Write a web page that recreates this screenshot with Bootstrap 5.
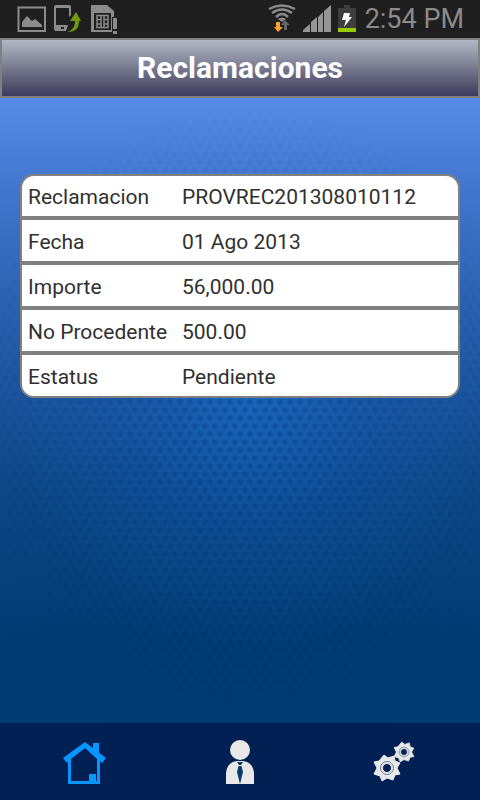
<!DOCTYPE html>
<html lang="es">
<head>
<meta charset="utf-8">
<meta name="viewport" content="width=device-width, initial-scale=1">
<title>Reclamaciones</title>
<link href="https://cdn.jsdelivr.net/npm/bootstrap@5.3.0/dist/css/bootstrap.min.css" rel="stylesheet">
<style>
body { font-family: Roboto, "Noto Sans", sans-serif; background: #003a70; }
.status-bar { height: 38px; background: #1f1f1f; color: #8b8b8b; }
.clock { font-size: 27px; line-height: 38px; }
.title-bar { border: 2px solid #808080; background: linear-gradient(#b3b7c4, #3c3b5c); }
.title-bar h1 { font-size: 30px; line-height: 56px; font-weight: 700; }
.backdrop { position: relative; isolation: isolate;
  background:
    radial-gradient(ellipse 240px 240px at 52% 50%, rgba(20,125,225,.45), rgba(20,110,210,.2) 50%, rgba(20,120,220,0)),
    linear-gradient(#578be9 0%, #4679d2 12%, #2e66b5 30%, #1d559f 46%, #0e4889 62%, #033c75 85%, #003a70 100%); }
.backdrop::before { content: ""; position: absolute; inset: 0; z-index: -1;
  background-image: radial-gradient(circle, rgba(0,35,95,.3) 1px, rgba(0,35,95,0) 4px), radial-gradient(circle, rgba(0,35,95,.3) 1px, rgba(0,35,95,0) 4px);
  background-size: 10px 16px; background-position: 0 0, 5px 8px;
  -webkit-mask-image: radial-gradient(ellipse 300px 330px at 52% 54%, #000, rgba(0,0,0,.6) 50%, transparent);
  mask-image: radial-gradient(ellipse 300px 330px at 52% 54%, #000, rgba(0,0,0,.6) 50%, transparent); }
.claim { margin: 76px 20px 0; border: 2px solid #808080; border-radius: 14px; overflow: hidden; background: #fff; }
.claim table { font-size: 21px; line-height: 38px; color: #303030; border-collapse: separate; border-spacing: 0; }
.claim th, .claim td { padding: 2px 0 0; font-weight: 400; height: 40px; }
.claim th { width: 160px; padding-left: 6px; }
.claim tr + tr > * { border-top: 4px solid #808080; height: 45px; }
.tab-bar { padding: 0 8px; height: 77px; background: #032055; }
.tab-bar a { line-height: 0; }
</style>
<script src="https://cdn.jsdelivr.net/npm/bootstrap@5.3.0/dist/js/bootstrap.bundle.min.js"></script>
</head>
<body class="min-vh-100 d-flex flex-column">
<div class="status-bar d-flex align-items-center justify-content-between">
  <svg width="120" height="38" aria-hidden="true">
    <g fill="none" stroke="#8b8b8b" stroke-width="2">
      <path d="M18.500 7.500H45V31H18.500Z"/>
      <path d="M97 15.500H108V27.500H97ZM97 19.500H101V24H97M108 19.500H104V24H108M101 15.500V27.500M104 15.500V27.500" stroke-width="1.500"/>
    </g>
    <path d="M22 27V22L27 16L32 21L35 19L42 25V27Z" fill="#8b8b8b"/>
    <path fill-rule="evenodd" d="M56 5H69Q71 5 71 7V15L69 17V8H56V25H68L66 31H56Q54 31 54 29V7Q54 5 56 5ZM61 27V29H64V27Z" fill="#8b8b8b"/>
    <path d="M67 32C73 30 75 26 75 21H70L76 12L81 21H79C79 28 76 32 67 32Z" fill="#71990d"/>
    <path fill-rule="evenodd" d="M91 5H107L114 11V17H112V32H91ZM94 13V30H111V13Z" fill="#8b8b8b"/>
    <path d="M113 18H117V29H113ZM113 31H117V34H113Z" fill="#8b8b8b"/>
  </svg>
  <div class="d-flex align-items-center pe-3">
    <svg width="97" height="38" aria-hidden="true">
      <g fill="none" stroke="#8b8b8b" stroke-width="2.500">
        <path d="M1 9Q14 2 27 9M4 13Q14 6 24 13M8 17Q14 11 20 17"/>
      </g>
      <path d="M10 19Q14 16 18 19L14 22Z" fill="#8b8b8b"/>
      <path d="M8 22H12V27H15L10 32L6 27H8Z" fill="#ffa02b"/>
      <path d="M16 30H19V25H22L17 20L13 25H16Z" fill="#666"/>
      <path d="M35 32V30L42 24V32ZM43 32V22L49 17V32ZM50 32V17L55 12V32ZM56 32V11L63 5V32Z" fill="#969696"/>
      <path d="M70 8H76V5H82V8H88V28H70Z" fill="#3e3e3e"/>
      <path d="M70 28H88V32H70Z" fill="#99cc00"/>
      <path d="M76 13H82L81 17H84L76 27L78 20H74Z" fill="#fff"/>
    </svg>
    <span class="clock">2:54 PM</span>
  </div>
</div>
<header class="title-bar text-center text-white"><h1 class="m-0">Reclamaciones</h1></header>
<main class="backdrop flex-grow-1 pb-4 d-flex flex-column">
  <div class="claim">
    <table class="w-100">
      <tbody>
        <tr><th scope="row">Reclamacion</th><td>PROVREC201308010112</td></tr>
        <tr><th scope="row">Fecha</th><td>01 Ago 2013</td></tr>
        <tr><th scope="row">Importe</th><td>56,000.00</td></tr>
        <tr><th scope="row">No Procedente</th><td>500.00</td></tr>
        <tr><th scope="row">Estatus</th><td>Pendiente</td></tr>
      </tbody>
    </table>
  </div>
</main>
<nav class="tab-bar d-flex align-items-center text-center">
  <div class="col"><a href="#inicio" aria-label="Inicio">
    <svg width="44" height="46" viewBox="0 0 44 46"><path d="M22 3L43 19L39 24L37 22.500V45H5V22.500L4 24L0 19ZM22 9L8 20V42H34V20Z" fill="#0795ff" fill-rule="evenodd"/><path d="M30 4H36V15L30 10ZM26 35H33V42H26Z" fill="#0795ff"/></svg>
  </a></div>
  <div class="col"><a href="#perfil" aria-label="Perfil">
    <svg width="34" height="46" viewBox="0 0 34 46"><circle cx="17" cy="11" r="10" fill="#e8e8e8"/><path d="M3 45V34Q4 23 14 22H20Q30 23 31 34V45Z" fill="#e8e8e8"/><path d="M14 23H20L18 26H16ZM15.500 27H18.500L20 33L17 45L14 33Z" fill="#0b3b66"/></svg>
  </a></div>
  <div class="col"><a href="#ajustes" aria-label="Ajustes">
    <svg width="44" height="46" viewBox="0 0 44 46">
      <defs><g id="gear">
        <path fill-rule="evenodd" fill="#e8e8e8" stroke="#e8e8e8" stroke-linejoin="round" d="M-3 -13L1 -10L7 -12L8 -7L13 -5L10 0L13 6L8 7L6 12L0 10L-5 13L-7 8L-13 6L-10 0L-13 -6L-8 -7ZM0 -4.500A4.500 4.500 0 1 0 0 4.500A4.500 4.500 0 1 0 0 -4.500Z"/>
        <circle r="6.500" fill="none" stroke="#6b7e9c"/>
      </g></defs>
      <use href="#gear" x="14" y="29"/>
      <use href="#gear" transform="translate(31 13) scale(.76)"/>
    </svg>
  </a></div>
</nav>
</body>
</html>
